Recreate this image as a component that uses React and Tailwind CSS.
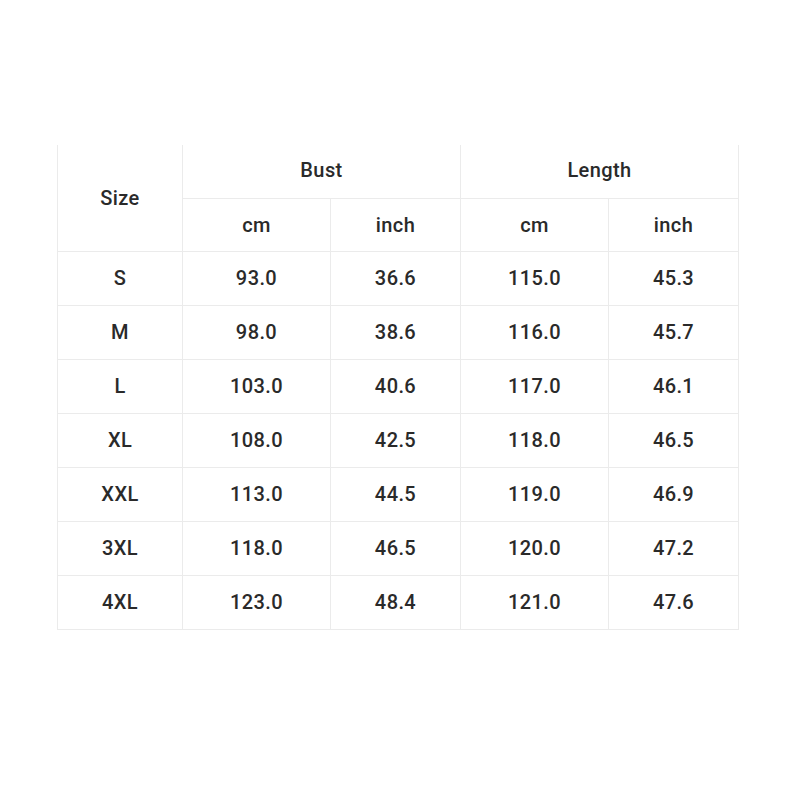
const rows = [
  ["S", "93.0", "36.6", "115.0", "45.3"],
  ["M", "98.0", "38.6", "116.0", "45.7"],
  ["L", "103.0", "40.6", "117.0", "46.1"],
  ["XL", "108.0", "42.5", "118.0", "46.5"],
  ["XXL", "113.0", "44.5", "119.0", "46.9"],
  ["3XL", "118.0", "46.5", "120.0", "47.2"],
  ["4XL", "123.0", "48.4", "121.0", "47.6"],
];

const cell = "border border-[#ebebeb] text-center align-middle";

export default function App() {
  return (
    <div
      className="w-[800px] h-[800px] bg-white pt-[145px] pl-[57px] text-[#2a2a2a] font-medium text-[20px] tracking-[0.4px]"
      style={{ fontFamily: "Roboto, 'Liberation Sans', sans-serif" }}
    >
      <table className="border-collapse table-fixed w-[681px] border-t-0">
        <colgroup>
          <col className="w-[125px]" />
          <col className="w-[148px]" />
          <col className="w-[130px]" />
          <col className="w-[148px]" />
          <col className="w-[130px]" />
        </colgroup>
        <thead>
          <tr className="h-[53px]">
            <th rowSpan={2} className={`${cell} border-t-0 font-medium`}>
              Size
            </th>
            <th colSpan={2} className={`${cell} border-t-0 font-medium pb-[2px]`}>
              Bust
            </th>
            <th colSpan={2} className={`${cell} border-t-0 font-medium pb-[2px]`}>
              Length
            </th>
          </tr>
          <tr className="h-[53px]">
            <th className={`${cell} font-medium`}>cm</th>
            <th className={`${cell} font-medium`}>inch</th>
            <th className={`${cell} font-medium`}>cm</th>
            <th className={`${cell} font-medium`}>inch</th>
          </tr>
        </thead>
        <tbody>
          {rows.map((r) => (
            <tr key={r[0]} className="h-[54px]">
              {r.map((v, i) => (
                <td key={i} className={cell}>
                  {v}
                </td>
              ))}
            </tr>
          ))}
        </tbody>
      </table>
    </div>
  );
}
